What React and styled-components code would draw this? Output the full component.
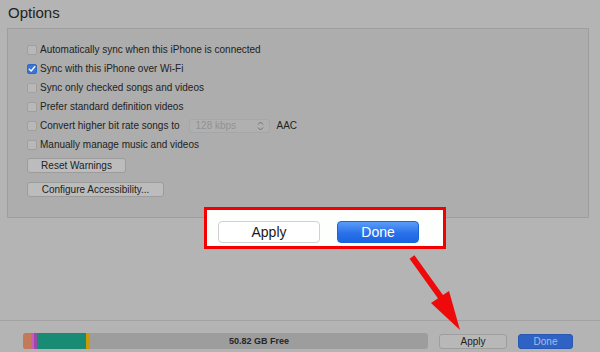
import React from "react";
import styled, { createGlobalStyle } from "styled-components";

const GlobalStyle = createGlobalStyle`
  html, body {
    margin: 0;
    padding: 0;
  }
  body {
    font-family: "Liberation Sans", Arial, sans-serif;
  }
`;

const options = [
  { label: "Automatically sync when this iPhone is connected" },
  { label: "Sync with this iPhone over Wi-Fi", checked: true },
  { label: "Sync only checked songs and videos" },
  { label: "Prefer standard definition videos" },
  { label: "Convert higher bit rate songs to", select: "128 kbps" },
  { label: "Manually manage music and videos" },
];

const segments = [
  { color: "#c27a58", width: 8 },
  { color: "#c75dba", width: 3 },
  { color: "#9b48aa", width: 3 },
  { color: "#178b74", width: 49 },
  { color: "#c99b0a", width: 4 },
];

function Checkbox({ checked }) {
  return (
    <Box checked={checked}>
      {checked && (
        <svg width="8" height="8" viewBox="0 0 8 8">
          <path
            d="M1.3 4.2 L3.2 6 L6.8 1.6"
            fill="none"
            stroke="#fff"
            strokeWidth="1.4"
            strokeLinecap="round"
            strokeLinejoin="round"
          />
        </svg>
      )}
    </Box>
  );
}

function App() {
  return (
    <>
      <GlobalStyle />
      <Screen>
        <Title>Options</Title>
        <Panel>
          {options.map((opt) => (
            <Row key={opt.label}>
              <Checkbox checked={opt.checked} />
              <Label>{opt.label}</Label>
              {opt.select && (
                <>
                  <Select>
                    <span>{opt.select}</span>
                    <svg width="7" height="10" viewBox="0 0 7 10">
                      <path
                        d="M1 3.5 L3.5 1 L6 3.5 M1 6.5 L3.5 9 L6 6.5"
                        fill="none"
                        stroke="#6f6f6f"
                        strokeWidth="1"
                      />
                    </svg>
                  </Select>
                  <Label>AAC</Label>
                </>
              )}
            </Row>
          ))}
          <PanelButton width={99} first>
            Reset Warnings
          </PanelButton>
          <PanelButton width={137}>Configure Accessibility...</PanelButton>
        </Panel>
        <Spacer />
        <Footer>
          <StorageBar>
            {segments.map((s, i) => (
              <Segment key={i} color={s.color} style={{ width: s.width }} />
            ))}
            <FreeSpace>50.82 GB Free</FreeSpace>
          </StorageBar>
          <FooterButton width={68}>Apply</FooterButton>
          <FooterButton width={55} primary>
            Done
          </FooterButton>
        </Footer>

        <Highlight>
          <BigButton width={102}>Apply</BigButton>
          <BigButton width={82} primary>
            Done
          </BigButton>
        </Highlight>
        <Arrow width="70" height="80" viewBox="0 0 70 80">
          <line
            x1="3"
            y1="2"
            x2="36"
            y2="48"
            stroke="#ee0a0a"
            strokeWidth="6"
          />
          <polygon points="22,48 40,36 51,75" fill="#ee0a0a" />
        </Arrow>
      </Screen>
    </>
  );
}

const Screen = styled.div`
  position: relative;
  width: 600px;
  height: 352px;
  overflow: hidden;
  background: #b4b4b4;
  display: flex;
  flex-direction: column;
  color: #1f1f1f;
`;

const Title = styled.div`
  height: 28px;
  box-sizing: border-box;
  padding: 4px 0 0 8px;
  font-size: 15px;
  line-height: 18px;
  color: #222;
`;

const Panel = styled.div`
  box-sizing: border-box;
  height: 190px;
  margin: 0 11px 0 7px;
  padding: 11px 0 0 19px;
  background: #adadad;
  border: 1px solid #9e9e9e;
  display: flex;
  flex-direction: column;
  align-items: flex-start;
`;

const Row = styled.div`
  height: 19px;
  display: flex;
  align-items: center;
`;

const Box = styled.div`
  box-sizing: border-box;
  width: 10px;
  height: 10px;
  margin-right: 3px;
  border-radius: 2px;
  border: 1px solid ${(p) => (p.checked ? "#3368c0" : "#a0a0a0")};
  background: ${(p) => (p.checked ? "#3a74d2" : "#b8b8b8")};
  display: flex;
  align-items: center;
  justify-content: center;
`;

const Label = styled.span`
  font-size: 10px;
  color: #222;
  white-space: nowrap;
`;

const Select = styled.div`
  box-sizing: border-box;
  width: 81px;
  height: 14px;
  margin: 0 7px 0 9px;
  padding: 0 5px 0 6px;
  border: 1px solid #a6a6a6;
  border-radius: 3px;
  background: #b0b0b0;
  display: flex;
  align-items: center;
  justify-content: space-between;
  font-size: 10px;
  color: #929292;
`;

const PanelButton = styled.div`
  box-sizing: border-box;
  width: ${(p) => p.width}px;
  height: 15px;
  margin-top: ${(p) => (p.first ? 4 : 9)}px;
  border: 1px solid #9c9c9c;
  border-radius: 3px;
  background: #bcbcbc;
  font-size: 10px;
  line-height: 13px;
  text-align: center;
  color: #222;
`;

const Spacer = styled.div`
  flex: 1;
`;

const Footer = styled.div`
  height: 32px;
  box-sizing: border-box;
  border-top: 1px solid #a2a2a2;
  padding: 12px 0 0 23px;
  display: flex;
  align-items: flex-start;
  gap: 11px;
`;

const StorageBar = styled.div`
  width: 405px;
  height: 16px;
  border-radius: 3px;
  overflow: hidden;
  display: flex;
  background: #9d9d9d;
`;

const Segment = styled.div`
  height: 100%;
  background: ${(p) => p.color};
`;

const FreeSpace = styled.div`
  flex: 1;
  font-size: 9px;
  font-weight: bold;
  line-height: 16px;
  text-align: center;
  color: #262626;
`;

const FooterButton = styled.div`
  box-sizing: border-box;
  width: ${(p) => p.width}px;
  height: 15px;
  margin-top: 1px;
  border-radius: 3px;
  border: 1px solid ${(p) => (p.primary ? "#2a58b0" : "#9e9e9e")};
  background: ${(p) => (p.primary ? "#2e62c4" : "#b8b8b8")};
  color: ${(p) => (p.primary ? "#a8bde6" : "#222")};
  font-size: 10px;
  line-height: 13px;
  text-align: center;
`;

const Highlight = styled.div`
  position: absolute;
  left: 204px;
  top: 207px;
  width: 242px;
  height: 42px;
  box-sizing: border-box;
  border: 3px solid #f40000;
  background: #fdfffd;
  padding: 11px 0 0 11px;
  display: flex;
  align-items: flex-start;
  gap: 17px;
`;

const BigButton = styled.div`
  box-sizing: border-box;
  width: ${(p) => p.width}px;
  height: 22px;
  border-radius: 4px;
  border: 1px solid ${(p) => (p.primary ? "#1d63d8" : "#d0d0d0")};
  background: ${(p) =>
    p.primary ? "linear-gradient(#5a9cf8, #2a72ea 55%, #1b64e0)" : "#fff"};
  color: ${(p) => (p.primary ? "#fff" : "#1a1a1a")};
  font-size: 14px;
  line-height: 20px;
  text-align: center;
`;

const Arrow = styled.svg`
  position: absolute;
  left: 409px;
  top: 255px;
`;

export default App;
